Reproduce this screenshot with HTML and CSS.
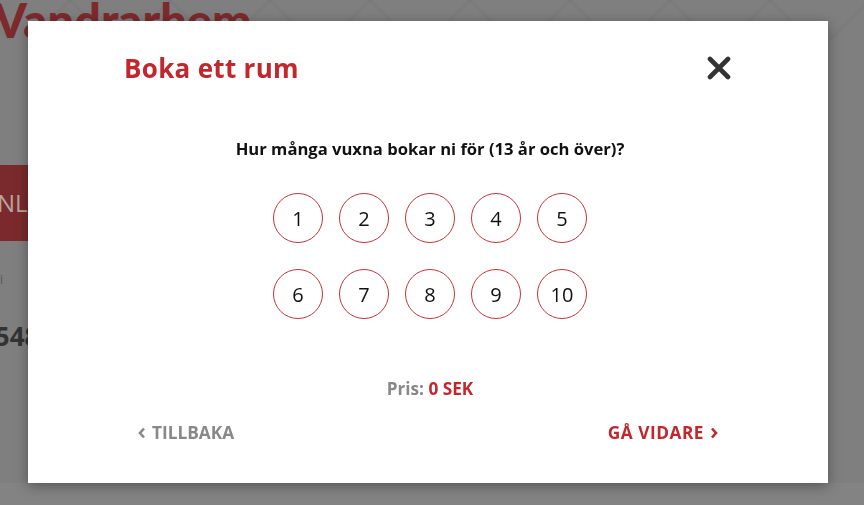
FILE: index.html
```html
<!DOCTYPE html>
<html lang="sv">
<head>
    <meta charset="UTF-8">
    <meta name="viewport" content="width=device-width, initial-scale=1.0">
    <title>Boka ett rum</title>
    <link rel="stylesheet" href="styles.css">
</head>
<body>
    <div class="page">
        <h1 class="page-title">Vandrarhem</h1>
        <div class="page-row">
            <div class="page-btn">BOKA ONLINE</div>
        </div>
        <div class="page-small">i</div>
        <div class="page-phone">0548</div>
    </div>

    <div class="overlay">
        <div class="modal">
            <div class="modal-head">
                <h2>Boka ett rum</h2>
                <button class="close" aria-label="Stäng">
                    <svg width="24" height="24" viewBox="0 0 24 24">
                        <path d="M3 3 L21 21 M21 3 L3 21" stroke="#333" stroke-width="4.6" stroke-linecap="round"/>
                    </svg>
                </button>
            </div>

            <div class="modal-body">
                <p class="question">Hur många vuxna bokar ni för (13 år och över)?</p>

                <div class="choices">
                    <button class="choice">1</button>
                    <button class="choice">2</button>
                    <button class="choice">3</button>
                    <button class="choice">4</button>
                    <button class="choice">5</button>
                    <button class="choice">6</button>
                    <button class="choice">7</button>
                    <button class="choice">8</button>
                    <button class="choice">9</button>
                    <button class="choice">10</button>
                </div>

                <p class="price">Pris: <span>0 SEK</span></p>
            </div>

            <div class="modal-foot">
                <a class="back" href="#">
                    <svg width="8" height="12" viewBox="0 0 8 12"><path d="M6 1.5 L2 6 L6 10.5" fill="none" stroke="currentColor" stroke-width="2.6"/></svg>
                    TILLBAKA
                </a>
                <a class="next" href="#">
                    GÅ VIDARE
                    <svg width="8" height="12" viewBox="0 0 8 12"><path d="M2 1.5 L6 6 L2 10.5" fill="none" stroke="currentColor" stroke-width="2.6"/></svg>
                </a>
            </div>
        </div>
    </div>
</body>
</html>
```

FILE: styles.css
```css
body {
    margin: 0;
    background: #838383;
    font-family: "Open Sans", "Noto Sans", sans-serif;
    height: 505px;
    overflow: hidden;
}
.page {
    position: relative;
    height: 483px;
    background: #7f7f7f;
    background-image:
        linear-gradient(135deg, transparent 48%, rgba(0,0,0,0.04) 50%, transparent 52%),
        linear-gradient(45deg, transparent 48%, rgba(0,0,0,0.04) 50%, transparent 52%);
    background-size: 100px 80px;
    background-position: 320px -40px;
    background-repeat: repeat-x;
}
.page-title {
    margin: 0;
    font-family: "Lato", sans-serif;
    font-size: 47px;
    line-height: 34px;
    font-weight: 900;
    color: #7e2a2c;
    transform: translate(-6px, 3px);
}
.page-row {
    margin-top: 131px;
}
.page-btn {
    width: 120px;
    height: 76px;
    margin-left: -92px;
    background: #7a2a2c;
    color: #b9a3a3;
    font-size: 24px;
    line-height: 76px;
    text-align: right;
    padding-right: 6px;
    overflow: hidden;
    white-space: nowrap;
}
.page-small {
    margin-top: 30px;
    color: #555;
    font-size: 12px;
}
.page-phone {
    margin: 30px 0 0 -20px;
    font-size: 26px;
    font-weight: 700;
    color: #333;
}
.overlay {
    position: fixed;
    inset: 0;
    padding: 21px 36px 0 28px;
}
.modal {
    width: 800px;
    height: 462px;
    box-sizing: border-box;
    background: #fff;
    box-shadow: 0 3px 12px rgba(0, 0, 0, 0.35);
    padding: 33px 97px 0 96px;
}
.modal-head {
    display: flex;
    justify-content: space-between;
    align-items: center;
    height: 28px;
}
.modal-head h2 {
    margin: 0;
    font-size: 26px;
    line-height: 28px;
    font-weight: 700;
    letter-spacing: 0.3px;
    color: #c1272d;
}
.close {
    background: none;
    border: none;
    padding: 0;
    width: 24px;
    height: 24px;
    cursor: pointer;
}
.close svg {
    display: block;
}
.modal-body {
    padding-left: 5px;
}
.question {
    margin: 57px 0 0;
    text-align: center;
    font-size: 16.6px;
    line-height: 20px;
    font-weight: 700;
    color: #111;
}
.choices {
    display: grid;
    grid-template-columns: repeat(5, 50px);
    gap: 26px 16px;
    justify-content: center;
    margin-top: 34px;
}
.choice {
    width: 50px;
    height: 50px;
    border-radius: 50%;
    border: 1px solid #c4343a;
    background: #fff;
    font-family: inherit;
    font-size: 20px;
    color: #111;
    padding: 0;
    cursor: pointer;
}
.price {
    margin: 60px 0 0;
    text-align: center;
    font-size: 17.2px;
    line-height: 20px;
    font-weight: 700;
    color: #888;
}
.price span {
    color: #c1272d;
}
.modal-foot {
    display: flex;
    justify-content: space-between;
    margin-top: 24px;
    padding: 0 13px 0 14px;
}
.modal-foot a {
    display: flex;
    align-items: center;
    gap: 6px;
    line-height: 20px;
    text-decoration: none;
    font-size: 17.3px;
    font-weight: 700;
}
.back {
    color: #888;
}
.next {
    color: #c1272d;
    letter-spacing: 0.5px;
}
```
